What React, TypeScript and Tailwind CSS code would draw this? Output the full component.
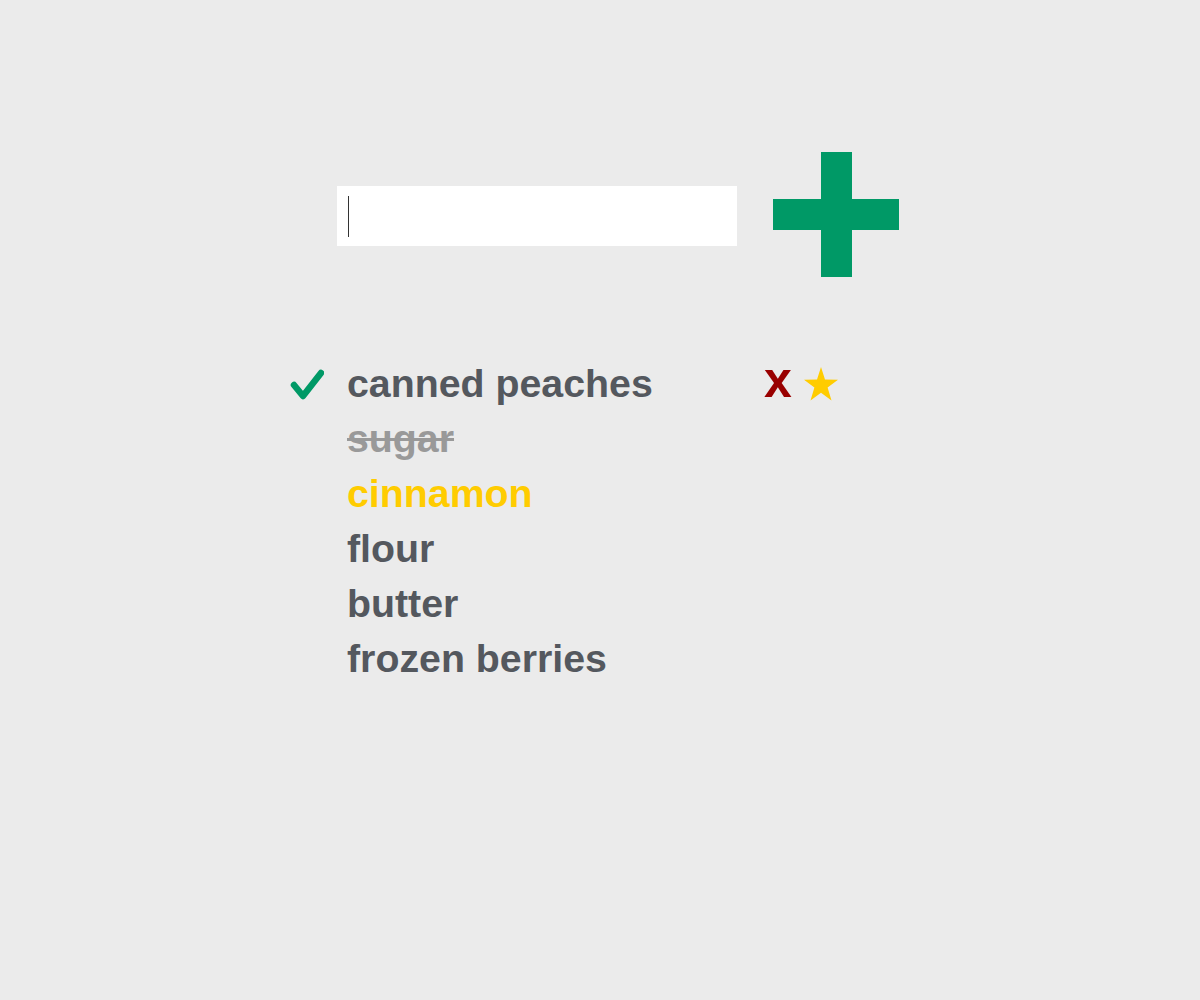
import React from 'react';

const CheckIcon = () => (
  <svg width="34" height="32" viewBox="0 0 34 32" className="shrink-0">
    <polyline
      points="4,17 13,28 31,5"
      fill="none"
      stroke="#009966"
      strokeWidth="6.5"
      strokeLinecap="round"
      strokeLinejoin="round"
    />
  </svg>
);

const StarIcon = () => (
  <svg width="34" height="34" viewBox="0 0 34 34">
    <polygon
      points="17,0 21,12.5 34,12.8 23.6,20.6 27.5,33.5 17,25.8 6.5,33.5 10.4,20.6 0,12.8 13,12.5"
      fill="#ffcc00"
    />
  </svg>
);

const App = () => {
  const items = [
    { id: 1, name: 'canned peaches', done: false, starred: false, active: true },
    { id: 2, name: 'sugar', done: true, starred: false, active: false },
    { id: 3, name: 'cinnamon', done: false, starred: true, active: false },
    { id: 4, name: 'flour', done: false, starred: false, active: false },
    { id: 5, name: 'butter', done: false, starred: false, active: false },
    { id: 6, name: 'frozen berries', done: false, starred: false, active: false },
  ];

  return (
    <div className="min-h-screen w-full bg-[#ebebeb] font-['Liberation_Sans',Arial,sans-serif]">
      <div className="flex items-center pt-[152px] pl-[337px] gap-[36px]">
        <div className="relative w-[400px] h-[60px] bg-white mt-[2px]">
          <input className="w-full h-full bg-transparent outline-none px-[11px] text-[36px] text-[#54585e]" />
          <span className="absolute left-[11px] top-[10px] h-[41px] w-px bg-[#333]" />
        </div>
        <button className="flex flex-col items-center w-[126px] h-[125px]">
          <div className="w-[31px] h-[47px] bg-[#009966]" />
          <div className="w-[126px] h-[31px] bg-[#009966]" />
          <div className="w-[31px] h-[47px] bg-[#009966]" />
        </button>
      </div>

      <ul className="mt-[79px] pl-[290px] flex flex-col">
        {items.map((item) => (
          <li key={item.id} className="flex items-center h-[55px]">
            <div className="w-[57px] flex items-center">
              {item.active && <CheckIcon />}
            </div>
            <span
              className={
                'w-[417px] text-[39.3px] font-bold leading-[55px] ' +
                (item.done
                  ? 'text-[#999999] line-through'
                  : item.starred
                  ? 'text-[#ffcc00]'
                  : 'text-[#54585e]')
              }
            >
              {item.name}
            </span>
            {item.active && (
              <div className="flex items-center gap-[12px]">
                <span className="text-[50px] font-bold leading-[55px] text-[#990000] -mt-[6px]">x</span>
                <StarIcon />
              </div>
            )}
          </li>
        ))}
      </ul>
    </div>
  );
};

export default App;
